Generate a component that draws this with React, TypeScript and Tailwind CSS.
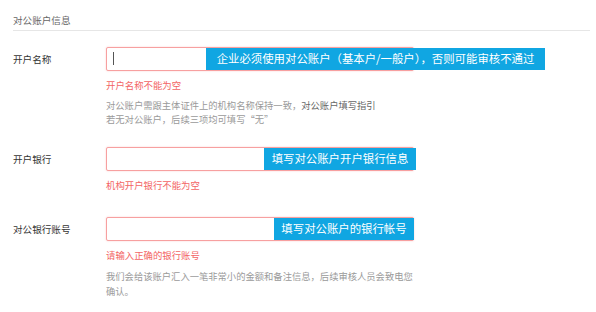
import type { ReactElement, ReactNode } from "react";

const FONT = "font-['Microsoft_YaHei','Noto_Sans_CJK_SC',sans-serif]";

interface FieldRowProps {
  label: string;
  tip: string;
  tipClass: string;
  error: string;
  showCaret?: boolean;
  children?: ReactNode;
  className?: string;
}

function FieldRow({ label, tip, tipClass, error, showCaret, children, className }: FieldRowProps): ReactElement {
  return (
    <div className={`flex items-start ${className ?? ""}`}>
      <div className="flex h-[24px] w-[93px] shrink-0 items-center text-[9.6px] text-[#333]">{label}</div>
      <div className="w-[308px] shrink-0">
        <div className="relative h-[24px] rounded-[2px] border border-[#f7a0a0] bg-white shadow-[0_0_2px_rgba(245,108,108,0.35)]">
          {showCaret && <span className="absolute left-[6px] top-[4px] h-[13px] w-px bg-[#555]" />}
          <div
            className={`absolute top-0 flex h-[22px] items-center justify-center whitespace-nowrap bg-[#10a6e2] text-[11.4px] text-white ${tipClass}`}
          >
            {tip}
          </div>
        </div>
        <p className="mt-[7px] text-[9.4px] leading-[14px] text-[#f36464]">{error}</p>
        {children}
      </div>
    </div>
  );
}

export default function App(): ReactElement {
  return (
    <div className={`h-[312px] w-[596px] overflow-hidden bg-white pl-[13px] pr-[6px] ${FONT}`}>
      <div className="border-b border-[#e6e6e6] pb-[3px] pt-[13px] text-[9.6px] leading-[14px] text-[#666]">
        对公账户信息
      </div>

      <FieldRow
        className="mt-[16px]"
        label="开户名称"
        tip="企业必须使用对公账户（基本户/一般户），否则可能审核不通过"
        tipClass="left-[99px] w-[339px]"
        error="开户名称不能为空"
        showCaret
      >
        <p className="mt-[6px] text-[9.3px] leading-[14px] text-[#9a9a9a]">
          对公账户需跟主体证件上的机构名称保持一致，<span className="text-[#666]">对公账户填写指引</span>
          <br />
          若无对公账户，后续三项均可填写“无”
        </p>
      </FieldRow>

      <FieldRow
        className="mt-[21px]"
        label="开户银行"
        tip="填写对公账户开户银行信息"
        tipClass="left-[157px] w-[152px]"
        error="机构开户银行不能为空"
      />

      <FieldRow
        className="mt-[25px]"
        label="对公银行账号"
        tip="填写对公账户的银行帐号"
        tipClass="left-[167px] w-[140px]"
        error="请输入正确的银行账号"
      >
        <p className="mt-[7px] w-[310px] text-[9.3px] leading-[15px] text-[#9a9a9a]">
          我们会给该账户汇入一笔非常小的金额和备注信息，后续审核人员会致电您确认。
        </p>
      </FieldRow>
    </div>
  );
}
